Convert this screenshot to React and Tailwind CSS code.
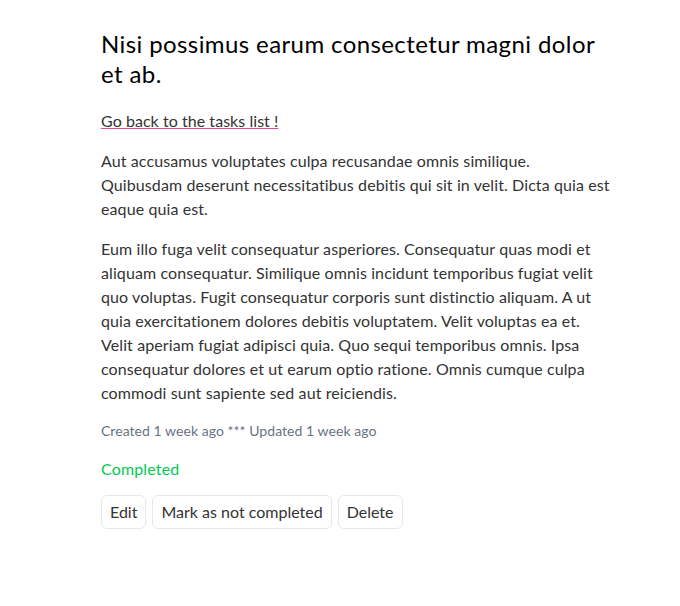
export default function App() {
  return (
    <div className="min-h-[606px] bg-white" style={{ fontFamily: 'Lato, sans-serif' }}>
      <div className="ml-[101px] w-[512px] pt-[29px] text-[#212529]">
        <h1 className="text-[24px] leading-[30px] tracking-[0.4px] text-black">Nisi possimus earum consectetur magni dolor et ab.</h1>
        <div className="mt-[20px] leading-[24px]">
          <a href="#" className="tracking-[0.05px] text-[#333] underline decoration-[#ec4899]">Go back to the tasks list !</a>
        </div>
        <p className="mt-[16px] leading-[24px] tracking-[0.1px] text-[#333]">Aut accusamus voluptates culpa recusandae omnis similique. Quibusdam deserunt necessitatibus debitis qui sit in velit. Dicta quia est eaque quia est.</p>
        <p className="mt-[16px] leading-[24px] tracking-[0.1px] text-[#333]">Eum illo fuga velit consequatur asperiores. Consequatur quas modi et aliquam consequatur. Similique omnis incidunt temporibus fugiat velit quo voluptas. Fugit consequatur corporis sunt distinctio aliquam. A ut quia exercitationem dolores debitis voluptatem. Velit voluptas ea et. Velit aperiam fugiat adipisci quia. Quo sequi temporibus omnis. Ipsa consequatur dolores et ut earum optio ratione. Omnis cumque culpa commodi sunt sapiente sed aut reiciendis.</p>
        <div className="mt-[16px] text-[14px] leading-[20px] tracking-[0.05px] text-gray-500">Created 1 week ago *** Updated 1 week ago</div>
        <div className="mt-[16px] leading-[24px] tracking-[0.15px] text-green-500">Completed</div>
        <div className="mt-[14px] flex gap-[6px]">
          <button className="h-[34px] rounded-md border border-gray-200 px-2 text-[#333]">Edit</button>
          <button className="h-[34px] rounded-md border border-gray-200 px-2 text-[#333]">Mark as not completed</button>
          <button className="h-[34px] rounded-md border border-gray-200 px-2 text-[#333]">Delete</button>
        </div>
      </div>
    </div>
  );
}
